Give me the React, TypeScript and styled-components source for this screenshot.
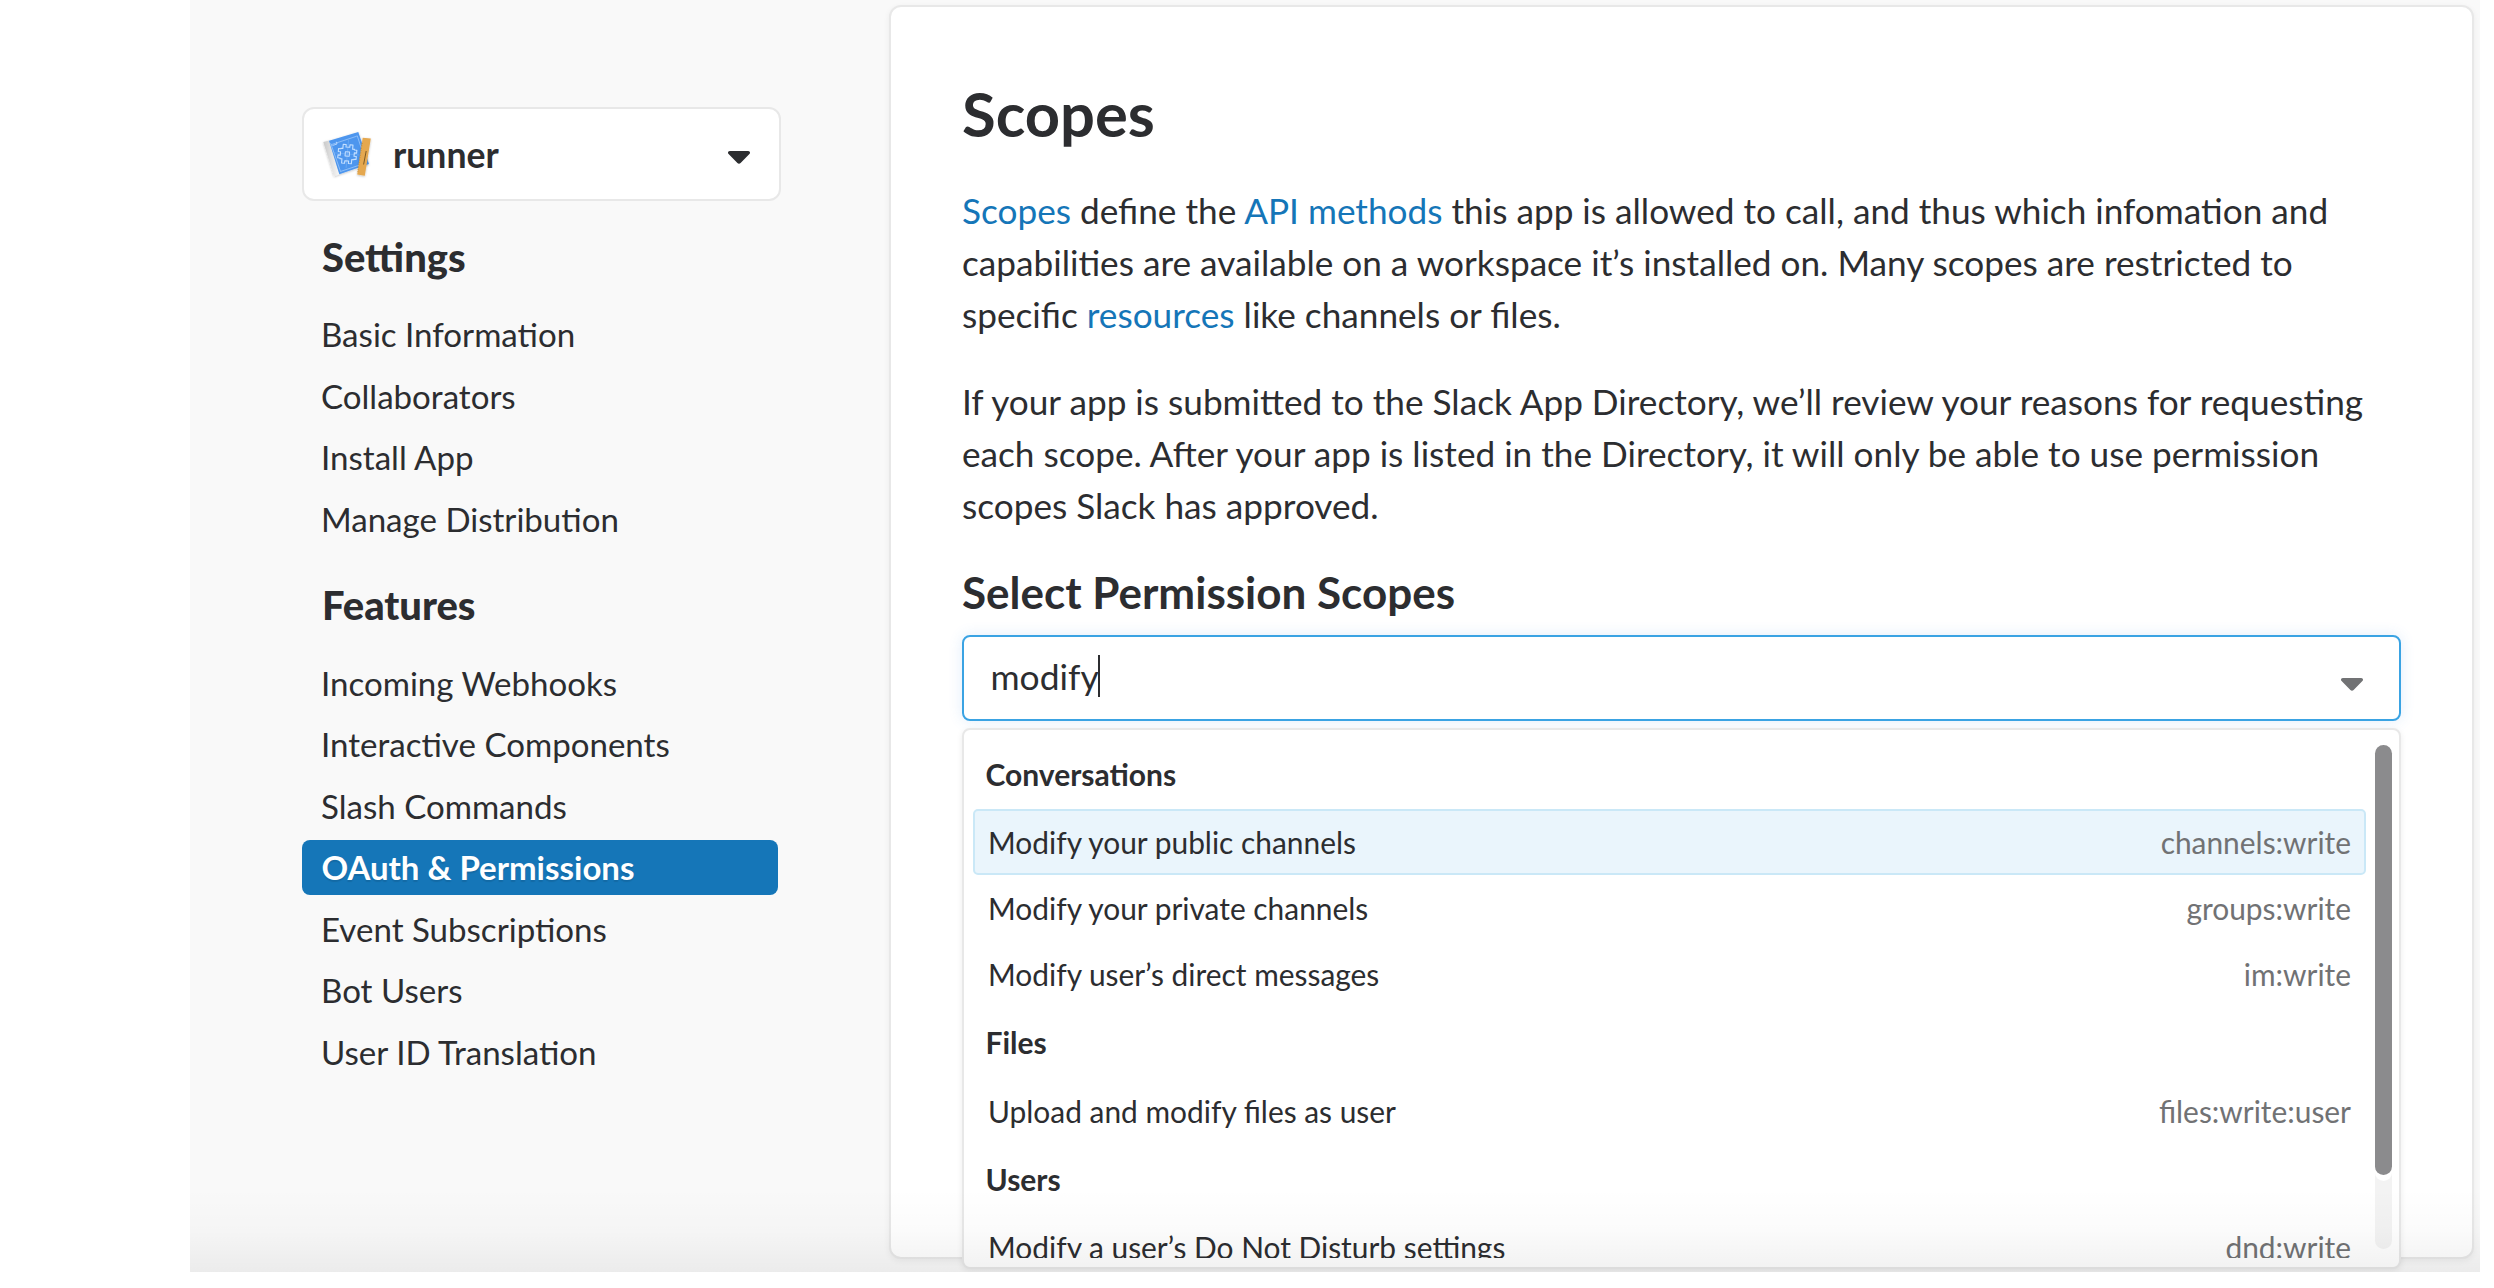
import React from 'react';
import styled, { createGlobalStyle } from 'styled-components';

const ink = '#2c2d30';
const muted = '#717274';
const line = '#e8e8e8';
const link = '#1576b8';

const GlobalStyle = createGlobalStyle`
  *, *::before, *::after { box-sizing: border-box; }
  body {
    margin: 0;
    background: #fff;
    color: ${ink};
    font-family: Lato, 'Liberation Sans', sans-serif;
  }
  h1, h2, h3, p, ul { margin: 0; padding: 0; }
  ul { list-style: none; }
`;

const Page = styled.div`
  position: relative;
  display: flex;
  height: 1272px;
  margin: 0 14px 16px 190px;
  background: #f9f9f9;
  overflow: hidden;
`;

const BottomShade = styled.div`
  position: absolute;
  inset: auto 0 0 0;
  height: 84px;
  pointer-events: none;
  background: linear-gradient(to bottom, rgba(0, 0, 0, 0), rgba(0, 0, 0, 0.015) 50%, rgba(0, 0, 0, 0.055));
`;

const Sidebar = styled.aside`
  flex: none;
  width: 699px;
  padding: 107px 0 0 112px;
`;

const AppPicker = styled.div`
  display: flex;
  align-items: center;
  width: 479px;
  height: 94px;
  padding: 0 29px 0 19px;
  background: #fff;
  border: 2px solid ${line};
  border-radius: 12px;
`;

const AppName = styled.span`
  flex: 1;
  padding-top: 1px;
  margin-left: 21px;
  font-size: 35.6px;
  font-weight: 700;
  line-height: 44px;
`;

const PickerArrow = styled.span`
  display: flex;
  padding-top: 6px;
`;

const NavHeading = styled.h3<{ $gap: number }>`
  margin: ${(p) => p.$gap}px 0 26.5px 20px;
  font-size: 39.9px;
  font-weight: 900;
  line-height: 48px;
`;

const NavList = styled.ul`
  display: flex;
  flex-direction: column;
  gap: 6.45px;
  width: 476px;
`;

const NavItem = styled.li<{ $active?: boolean }>`
  height: 55px;
  padding-left: ${(p) => (p.$active ? 19.5 : 19)}px;
  border-radius: 8px;
  font-size: ${(p) => (p.$active ? 33 : 33.1)}px;
  line-height: 55px;
  ${(p) =>
    p.$active &&
    `background: ${link}; color: #fff; font-weight: 700; text-shadow: 0 2px 1px rgba(0, 0, 0, 0.1);`}
`;

const Panel = styled.main`
  flex: none;
  width: 1585px;
  height: 1254px;
  margin-top: 5px;
  padding: 70px 71px 0;
  background: #fff;
  border: 2px solid ${line};
  border-radius: 12px;
  box-shadow: 0 2px 6px rgba(0, 0, 0, 0.06);
`;

const Title = styled.h1`
  font-size: 61.5px;
  font-weight: 700;
  line-height: 72px;
`;

const Paragraph = styled.p`
  margin-top: 35px;
  font-size: 35.2px;
  line-height: 52px;
`;

const Link = styled.a`
  color: ${link};
`;

const FieldLabel = styled.h2`
  margin: 34.5px 0 17.5px;
  font-size: 44px;
  font-weight: 700;
  line-height: 52px;
`;

const Combo = styled.div`
  position: relative;
`;

const ComboField = styled.div`
  display: flex;
  align-items: center;
  height: 86px;
  padding: 0 36px 0 26.5px;
  border: 2px solid #3aa3e3;
  border-radius: 8px;
  background: #fff;
  box-shadow: 0 0 14px rgba(70, 140, 230, 0.16);
`;

const Typed = styled.span`
  padding-bottom: 3px;
  font-size: 35.4px;
  line-height: 44px;
`;

const Caret = styled.span`
  width: 2px;
  height: 42px;
  margin: 0 auto 4px -1px;
  background: ${ink};
`;

const FieldArrow = styled.span`
  display: flex;
  padding-top: 13px;
`;

const Menu = styled.div`
  position: absolute;
  top: 93px;
  left: 0;
  right: 0;
  display: flex;
  justify-content: space-between;
  height: 541px;
  padding: 9px 7px 9px 9px;
  background: #fff;
  border: 2px solid ${line};
  border-radius: 8px;
  box-shadow: 0 2px 6px rgba(0, 0, 0, 0.08);
`;

const Options = styled.div`
  width: 1393px;
  height: 519px;
  overflow: hidden;
`;

const GroupName = styled.h3`
  height: 70.4px;
  padding-left: 12.5px;
  font-size: 30px;
  font-weight: 700;
  line-height: 70.4px;
`;

const Option = styled.div<{ $highlighted?: boolean }>`
  display: flex;
  justify-content: space-between;
  height: 66px;
  padding: 0 13px;
  border: 2px solid ${(p) => (p.$highlighted ? '#cae8f7' : 'transparent')};
  border-radius: 5px;
  background: ${(p) => (p.$highlighted ? '#eaf5fc' : 'transparent')};
  font-size: 29.9px;
  line-height: 62px;
`;

const ScopeName = styled.span`
  color: ${muted};
`;

const Track = styled.div`
  width: 17px;
  height: 510px;
  border-radius: 8.5px;
  background: #f3f3f3;
`;

const Thumb = styled.div`
  height: 442px;
  padding: 6px 0;
  border-radius: 0 0 8.5px 8.5px;
  background: #fff;
  &::before {
    content: '';
    display: block;
    height: 430px;
    border-radius: 8.5px;
    background: #8b8b8d;
  }
`;

function Arrow({ color }: { color: string }) {
  return (
    <svg width="22" height="13" viewBox="0 0 22 13">
      <path
        d="M1.8 0H20.2C21.9 0 22.6 1.8 21.4 3L12.6 12.1C11.7 13.1 10.3 13.1 9.4 12.1L.6 3C-.6 1.8 .1 0 1.8 0Z"
        fill={color}
      />
    </svg>
  );
}

function BlueprintIcon() {
  return (
    <svg width="49" height="47" viewBox="0 0 49 47" overflow="visible">
      <defs>
        <linearGradient id="spine" x1="0" x2="1" y1="0" y2="0">
          <stop offset="0" stopColor="#c9c9c9" />
          <stop offset="1" stopColor="#f7f7f7" />
        </linearGradient>
        <filter id="soft" x="-20%" y="-20%" width="140%" height="140%">
          <feDropShadow dx="0" dy="0.8" stdDeviation="1.1" floodOpacity="0.25" />
        </filter>
      </defs>
      <g filter="url(#soft)">
        <path d="M.3 11L6 9.5L16.3 43.2L11 45.2Z" fill="url(#spine)" />
        <path d="M6 9.7L35.3 1L46 33L16.3 43.2Z" fill="#4d96ee" />
      </g>
      <g fill="none" stroke="#c5e0ff" strokeLinejoin="round">
        <path d="M8.4 13.6L33.8 5.2M34.2 4.6L43 31.5M17.6 40.4L40 33M7.6 12.2L17.6 40.6" strokeWidth=".7" opacity=".75" />
        <path d="M9.5 14.5L14 13L13.4 10.8" strokeWidth=".8" />
        <g transform="translate(24.3 23) rotate(5)">
          <path d="M-13 0H13M0-14V14" strokeWidth=".4" opacity=".5" />
          <path
            d="M-4.9-9.4H-1.9V-6.9H1.9V-9.4H4.9V-5.2H6.9V-4.6H9.2V-1.7H6.9V1.7H9.2V4.6H6.9V5.2H4.9V9.4H1.9V6.9H-1.9V9.4H-4.9V5.2H-6.9V4.6H-9.2V1.7H-6.9V-1.7H-9.2V-4.6H-6.9V-5.2H-4.9Z"
            strokeWidth="1.1"
          />
          <rect x="-2.1" y="-2.1" width="4.2" height="4.2" strokeWidth="1" />
        </g>
      </g>
      <g filter="url(#soft)">
        <path d="M39.7 6.7L47.8 7.4L41.8 44.8L34.2 43.6Z" fill="#e5a850" />
      </g>
      <path d="M43.2 20L40.6 33.5" stroke="#7c5a25" strokeWidth="1" />
      <path d="M39.2 12L34.8 41" stroke="#c48d3a" strokeWidth="1.2" strokeDasharray=".8 1.6" />
    </svg>
  );
}

const settings = ['Basic Information', 'Collaborators', 'Install App', 'Manage Distribution'];

const features = [
  'Incoming Webhooks',
  'Interactive Components',
  'Slash Commands',
  'OAuth & Permissions',
  'Event Subscriptions',
  'Bot Users',
  'User ID Translation',
];

const groups = [
  {
    name: 'Conversations',
    options: [
      { label: 'Modify your public channels', scope: 'channels:write' },
      { label: 'Modify your private channels', scope: 'groups:write' },
      { label: 'Modify user’s direct messages', scope: 'im:write' },
    ],
  },
  { name: 'Files', options: [{ label: 'Upload and modify files as user', scope: 'files:write:user' }] },
  { name: 'Users', options: [{ label: 'Modify a user’s Do Not Disturb settings', scope: 'dnd:write' }] },
];

export default function App() {
  return (
    <>
      <GlobalStyle />
      <Page>
        <Sidebar>
          <AppPicker>
            <BlueprintIcon />
            <AppName>runner</AppName>
            <PickerArrow>
              <Arrow color={ink} />
            </PickerArrow>
          </AppPicker>
          <NavHeading $gap={31.8}>Settings</NavHeading>
          <NavList>
            {settings.map((item) => (
              <NavItem key={item}>{item}</NavItem>
            ))}
          </NavList>
          <NavHeading $gap={34.8}>Features</NavHeading>
          <NavList>
            {features.map((item) => (
              <NavItem key={item} $active={item === 'OAuth & Permissions'}>
                {item}
              </NavItem>
            ))}
          </NavList>
        </Sidebar>
        <Panel>
          <Title>Scopes</Title>
          <Paragraph>
            <Link>Scopes</Link> define the <Link>API methods</Link> this app is allowed to call, and thus which
            infomation and capabilities are available on a workspace it’s installed on. Many scopes are restricted to
            specific <Link>resources</Link> like channels or files.
          </Paragraph>
          <Paragraph>
            If your app is submitted to the Slack App Directory, we’ll review your reasons for requesting each scope.
            After your app is listed in the Directory, it will only be able to use permission scopes Slack has
            approved.
          </Paragraph>
          <FieldLabel>Select Permission Scopes</FieldLabel>
          <Combo>
            <ComboField>
              <Typed>modify</Typed>
              <Caret />
              <FieldArrow>
                <Arrow color={muted} />
              </FieldArrow>
            </ComboField>
            <Menu>
              <Options>
                {groups.map((group) => (
                  <React.Fragment key={group.name}>
                    <GroupName>{group.name}</GroupName>
                    {group.options.map((option) => (
                      <Option key={option.scope} $highlighted={option.scope === 'channels:write'}>
                        <span>{option.label}</span>
                        <ScopeName>{option.scope}</ScopeName>
                      </Option>
                    ))}
                  </React.Fragment>
                ))}
              </Options>
              <Track>
                <Thumb />
              </Track>
            </Menu>
          </Combo>
        </Panel>
        <BottomShade />
      </Page>
    </>
  );
}
